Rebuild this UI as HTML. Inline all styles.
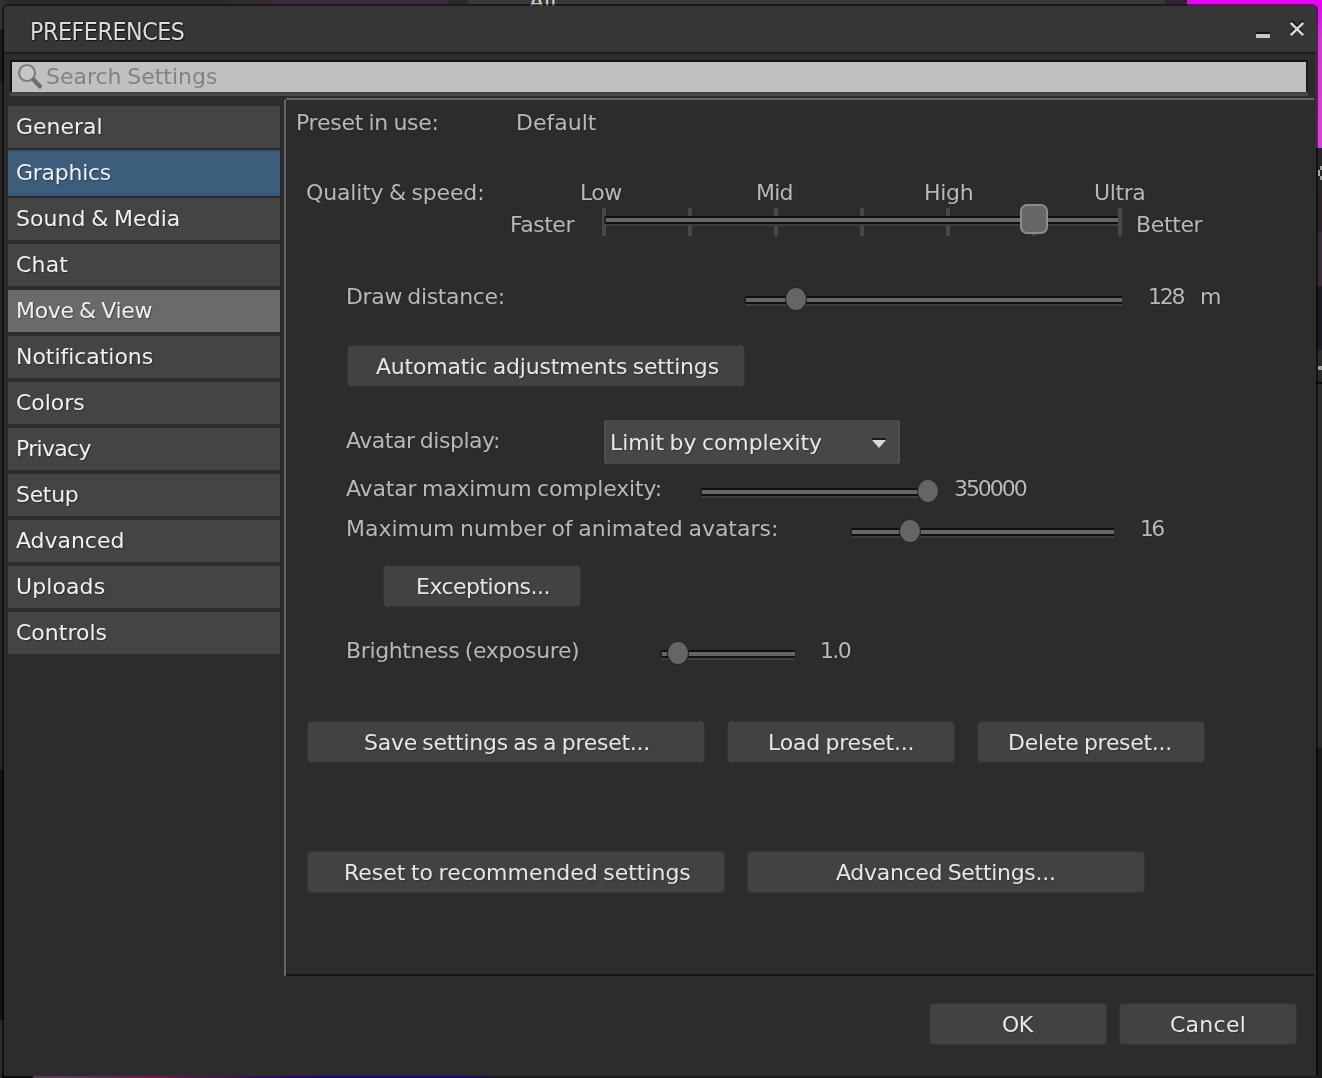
<!DOCTYPE html>
<html lang="en">
<head>
<meta charset="utf-8">
<title>Preferences</title>
<style>
html,body{margin:0;padding:0;}
body{width:1322px;height:1078px;overflow:hidden;background:#2a2a2a;position:relative;
  font-family:"DejaVu Sans","Liberation Sans",sans-serif;font-size:22px;word-spacing:-1.3px;color:#b6b6b6;}
.abs{position:absolute;}
/* backdrop strips */
#bgtop{left:0;top:0;width:1322px;height:6px;background:#393939;}
#bgtopL{left:0;top:0;width:448px;height:4px;background:linear-gradient(90deg,#2c2a2c 0,#2c2a2c 50%,#3a2c3a 65%,#3a2c3a 100%);}
#bgtopD{left:448px;top:0;width:20px;height:4px;background:#282828;}
#bgtopD2{left:1165px;top:0;width:22px;height:4px;background:#30222e;}
#bgtopM{left:1187px;top:0;width:135px;height:8px;background:#e800ff;}
#bgright{left:1310px;top:0;width:12px;height:1078px;background:linear-gradient(180deg,#282428 0,#282428 197px,#2a2228 197px,#2a2228 232px,#382c38 232px,#382c38 286px,#1e1a26 286px,#1e1a26 350px,#2a2a2a 350px,#2a2a2a 748px,#1a1a1a 748px);}
#bgrightM{left:1310px;top:0;width:12px;height:148px;background:linear-gradient(180deg,#e400fa 0,#d23ad0 40px,#d844d2 100%);}
#bgleft{left:0;top:0;width:4px;height:1078px;background:linear-gradient(180deg,#333 0,#333 30px,#1c1c1c 30px,#1c1c1c 82px,#2a242a 82px,#2a242a 770px,#161416 770px,#161416 1020px,#2a2a2a 1020px);}
#bgbot{left:0;top:1074px;width:1322px;height:4px;background:linear-gradient(90deg,#2c282c 0,#2c282c 2px,#0a0a0a 2px,#0a0a0a 32px,#5c3a5c 34px,#6a1a4c 150px,#3a0a5a 260px,#1a0c5c 330px,#1a0c5c 470px,#1c1c1c 500px,#1c1c1c 100%);}
/* window */
#win{left:2px;top:4px;width:1316px;height:1072px;background:#2c2c2c;background-clip:padding-box;border-radius:6px 6px 0 0;box-sizing:border-box;border:2px solid rgba(0,0,0,.55);border-bottom:0;overflow:hidden;}
#titlebar{left:4px;top:6px;width:1312px;height:46px;background:#363636;border-radius:4px 4px 0 0;}
#titleline{left:4px;top:52px;width:1312px;height:2px;background:#1e1e1e;}
/* search */
#search{left:10px;top:60px;width:1298px;height:32px;box-sizing:border-box;border-top:2px solid #141414;border-left:2px solid #141414;border-right:2px solid #1c1c1c;background:#c0c0c0;}
#searchB{left:10px;top:92px;width:1298px;height:4px;background:linear-gradient(180deg,#404040,#4c4c4c);}
/* tabs */
.tab{left:8px;width:272px;height:42px;background:#444444;}
.tab.sel{background:#3c5d7c;height:46px;box-shadow:inset 0 2px 0 #37526c,inset 0 -2px 0 #3a587a;}
.tab.hov{background:#6a6a6a;}
/* panel */
#panelT{left:286px;top:98px;width:1028px;height:2px;background:#646464;}
#panelL{left:284px;top:100px;width:2px;height:876px;background:#646464;}
#panelB{left:286px;top:974px;width:1028px;height:2px;background:#151515;}
#panel{left:286px;top:100px;width:1030px;height:874px;background:#2c2c2c;}
/* text */
.tx{white-space:nowrap;line-height:26px;will-change:transform;}
.title{font-size:24.7px;line-height:30px;font-family:"DejaVu Sans Condensed","DejaVu Sans",sans-serif;font-stretch:condensed;color:#dcdcdc;text-shadow:0 0 2px rgba(0,0,0,.7),1px 1px 1px rgba(0,0,0,.6);}
.srch{color:#828282;}
.tabt{color:#f0f0f0;text-shadow:1px 1px 1px rgba(0,0,0,.35);}
.lbl{color:#b8b8b8;text-shadow:0 0 2px rgba(0,0,0,.3);}
.cmb{color:#e6e6e6;text-shadow:1px 1px 1px rgba(0,0,0,.25);}
.btnt{color:#e6e6e6;text-shadow:1px 1px 1px rgba(0,0,0,.25);}
.btn{height:40px;background:#424242;border-radius:3px;box-shadow:0 0 0 2px #303030;}
.track{height:4px;background:#666666;border-top:2px solid #0e0e0e;border-bottom:2px solid #111;box-shadow:0 2px 0 #3e3e3e,-2px 0 0 #222;}
.thumb{width:20px;height:22px;border-radius:10px/11px;background:#656565;box-shadow:0 0 0 1px #262626;}
.tick{width:4px;height:28px;top:208px;background:#484848;}
</style>
</head>
<body>
<div class="abs" id="bgtop"></div>
<div class="abs" id="bgtopL"></div>
<div class="abs" id="bgtopD"></div>
<div class="abs" id="bgtopD2"></div>
<div class="abs" id="bgtopM"></div>
<div class="abs" id="bgright"></div>
<div class="abs" id="bgrightM"></div>
<div class="abs" style="left:1320px;top:166px;width:2px;height:4px;background:#9a9a9a;"></div>
<div class="abs" style="left:1318px;top:170px;width:2px;height:6px;background:#aaaaaa;"></div>
<div class="abs" style="left:1320px;top:176px;width:2px;height:4px;background:#9a9a9a;"></div>
<div class="abs" style="left:1318px;top:366px;width:4px;height:4px;background:#9c9c9c;"></div>
<div class="abs" style="left:1316px;top:382px;width:6px;height:2px;background:#0c0c0c;"></div>
<div class="abs" id="bgleft"></div>
<div class="abs" id="bgbot"></div>

<div class="abs" id="bgall" style="left:529px;top:-11px;line-height:26px;color:#d4d4d4;white-space:nowrap;">All</div>
<div class="abs" id="win"></div>
<div class="abs" id="titlebar"></div>
<div class="abs" id="titleline"></div>
<!-- minimize / close -->
<div class="abs" style="left:1256px;top:32px;width:14px;height:2px;background:#151515;"></div>
<div class="abs" style="left:1256px;top:34px;width:14px;height:4px;background:#c8c8c8;"></div>
<svg class="abs" style="left:1288px;top:18px;" width="18" height="20" viewBox="0 0 18 20">
  <path d="M3 3 L15 15 M15 3 L3 15" stroke="#151515" stroke-width="2.6" fill="none"/>
  <path d="M2.8 4.8 L15.2 17.2 M15.2 4.8 L2.8 17.2" stroke="#d6d6d6" stroke-width="2.5" fill="none"/>
</svg>

<div class="abs" id="search"></div>
<div class="abs" id="searchB"></div>
<svg class="abs" style="left:16px;top:62px;" width="28" height="28" viewBox="0 0 28 28">
  <circle cx="11" cy="11" r="8" fill="#c6c6c6" stroke="#7e7e7e" stroke-width="2.2"/>
  <path d="M17.5 17.5 L24 24.5" stroke="#6e6e6e" stroke-width="4.2" stroke-linecap="round"/>
</svg>

<div class="abs tab" style="top:106px;"></div>
<div class="abs tab sel" style="top:150px;"></div>
<div class="abs tab" style="top:198px;"></div>
<div class="abs tab" style="top:244px;"></div>
<div class="abs tab hov" style="top:290px;"></div>
<div class="abs tab" style="top:336px;"></div>
<div class="abs tab" style="top:382px;"></div>
<div class="abs tab" style="top:428px;"></div>
<div class="abs tab" style="top:474px;"></div>
<div class="abs tab" style="top:520px;"></div>
<div class="abs tab" style="top:566px;"></div>
<div class="abs tab" style="top:612px;"></div>

<div class="abs" id="panel"></div>
<div class="abs" id="panelT"></div>
<div class="abs" id="panelL"></div>
<div class="abs" id="panelB"></div>

<!-- quality slider -->
<div class="abs tick" style="left:602px;"></div>
<div class="abs tick" style="left:688px;"></div>
<div class="abs tick" style="left:774px;"></div>
<div class="abs tick" style="left:860px;"></div>
<div class="abs tick" style="left:946px;"></div>
<div class="abs tick" style="left:1032px;"></div>
<div class="abs tick" style="left:1118px;"></div>
<div class="abs track" style="left:606px;top:216px;width:512px;"></div>
<div class="abs" style="left:1020px;top:204px;width:28px;height:30px;box-sizing:border-box;border:2px solid #8c8c8c;border-radius:7px;background:#666;"></div>

<div class="abs track" style="left:746px;top:296px;width:376px;"></div>
<div class="abs thumb" style="left:786px;top:288px;"></div>

<div class="abs btn" style="left:348px;top:346px;width:396px;"></div>

<div class="abs" style="left:604px;top:420px;width:296px;height:44px;background:#474747;border-radius:3px;box-shadow:inset -2px 0 0 #4f4f4f,inset 2px 0 0 #4f4f4f;"></div>
<svg class="abs" style="left:870px;top:436px;" width="18" height="14" viewBox="0 0 18 14">
  <rect x="2" y="2" width="14" height="2" fill="#1a1a1a"/>
  <path d="M2 4 H16 L9 12 Z" fill="#d8d8d8"/>
</svg>

<div class="abs track" style="left:702px;top:488px;width:226px;"></div>
<div class="abs thumb" style="left:918px;top:480px;"></div>

<div class="abs track" style="left:852px;top:528px;width:262px;"></div>
<div class="abs thumb" style="left:900px;top:520px;"></div>

<div class="abs btn" style="left:384px;top:566px;width:196px;"></div>

<div class="abs track" style="left:662px;top:650px;width:133px;"></div>
<div class="abs thumb" style="left:668px;top:642px;"></div>

<div class="abs btn" style="left:308px;top:722px;width:396px;"></div>
<div class="abs btn" style="left:728px;top:722px;width:226px;"></div>
<div class="abs btn" style="left:978px;top:722px;width:226px;"></div>

<div class="abs btn" style="left:308px;top:852px;width:416px;"></div>
<div class="abs btn" style="left:748px;top:852px;width:396px;"></div>

<div class="abs btn" style="left:930px;top:1004px;width:176px;"></div>
<div class="abs btn" style="left:1120px;top:1004px;width:176px;"></div>

<div id="t_title" class="abs tx title" style="left:30px;top:17px;letter-spacing:-0.445px;">PREFERENCES</div>
<div id="t_search" class="abs tx srch" style="left:46px;top:64px;letter-spacing:-0.010px;">Search Settings</div>
<div id="t_tab0" class="abs tx tabt" style="left:16px;top:114px;letter-spacing:-0.016px;">General</div>
<div id="t_tab1" class="abs tx tabt" style="left:16px;top:160px;letter-spacing:-0.268px;">Graphics</div>
<div id="t_tab2" class="abs tx tabt" style="left:16px;top:206px;letter-spacing:0.035px;">Sound &amp; Media</div>
<div id="t_tab3" class="abs tx tabt" style="left:16px;top:252px;letter-spacing:0.173px;">Chat</div>
<div id="t_tab4" class="abs tx tabt" style="left:16px;top:298px;letter-spacing:-0.330px;">Move &amp; View</div>
<div id="t_tab5" class="abs tx tabt" style="left:16px;top:344px;letter-spacing:-0.044px;">Notifications</div>
<div id="t_tab6" class="abs tx tabt" style="left:16px;top:390px;letter-spacing:-0.024px;">Colors</div>
<div id="t_tab7" class="abs tx tabt" style="left:16px;top:436px;letter-spacing:-0.687px;">Privacy</div>
<div id="t_tab8" class="abs tx tabt" style="left:16px;top:482px;letter-spacing:-0.330px;">Setup</div>
<div id="t_tab9" class="abs tx tabt" style="left:16px;top:528px;letter-spacing:-0.045px;">Advanced</div>
<div id="t_tab10" class="abs tx tabt" style="left:16px;top:574px;letter-spacing:0.093px;">Uploads</div>
<div id="t_tab11" class="abs tx tabt" style="left:16px;top:620px;letter-spacing:-0.003px;">Controls</div>
<div id="l_preset" class="abs tx lbl" style="left:296px;top:110px;letter-spacing:-0.261px;">Preset in use:</div>
<div id="l_default" class="abs tx lbl" style="left:516px;top:110px;letter-spacing:0.013px;">Default</div>
<div id="l_quality" class="abs tx lbl" style="left:306px;top:180px;letter-spacing:-0.164px;">Quality &amp; speed:</div>
<div id="l_low" class="abs tx lbl" style="left:580px;top:180px;letter-spacing:-0.500px;">Low</div>
<div id="l_mid" class="abs tx lbl" style="left:756px;top:180px;letter-spacing:-0.765px;">Mid</div>
<div id="l_high" class="abs tx lbl" style="left:924px;top:180px;letter-spacing:-0.304px;">High</div>
<div id="l_ultra" class="abs tx lbl" style="left:1094px;top:180px;letter-spacing:-0.402px;">Ultra</div>
<div id="l_faster" class="abs tx lbl" style="left:510px;top:212px;letter-spacing:-0.458px;">Faster</div>
<div id="l_better" class="abs tx lbl" style="left:1136px;top:212px;letter-spacing:-0.370px;">Better</div>
<div id="l_draw" class="abs tx lbl" style="left:346px;top:284px;letter-spacing:-0.360px;">Draw distance:</div>
<div id="l_128" class="abs tx lbl" style="left:1148px;top:284px;letter-spacing:-2.220px;">128</div>
<div id="l_m" class="abs tx lbl" style="left:1200px;top:284px;">m</div>
<div id="l_avdisp" class="abs tx lbl" style="left:346px;top:428px;letter-spacing:-0.474px;">Avatar display:</div>
<div id="l_combo" class="abs tx cmb" style="left:610px;top:430px;letter-spacing:-0.105px;">Limit by complexity</div>
<div id="l_avmax" class="abs tx lbl" style="left:346px;top:476px;letter-spacing:-0.171px;">Avatar maximum complexity:</div>
<div id="l_350" class="abs tx lbl" style="left:954px;top:476px;letter-spacing:-2.060px;">350000</div>
<div id="l_maxanim" class="abs tx lbl" style="left:346px;top:516px;letter-spacing:-0.015px;">Maximum number of animated avatars:</div>
<div id="l_16" class="abs tx lbl" style="left:1140px;top:516px;letter-spacing:-2.770px;">16</div>
<div id="l_bright" class="abs tx lbl" style="left:346px;top:638px;letter-spacing:-0.375px;">Brightness (exposure)</div>
<div id="l_10" class="abs tx lbl" style="left:820px;top:638px;letter-spacing:-1.650px;">1.0</div>
<div id="b_auto" class="abs tx btnt" style="left:376px;top:354px;letter-spacing:-0.187px;">Automatic adjustments settings</div>
<div id="b_exc" class="abs tx btnt" style="left:416px;top:574px;letter-spacing:-0.523px;">Exceptions...</div>
<div id="b_save" class="abs tx btnt" style="left:364px;top:730px;letter-spacing:-0.275px;">Save settings as a preset...</div>
<div id="b_load" class="abs tx btnt" style="left:768px;top:730px;letter-spacing:-0.206px;">Load preset...</div>
<div id="b_del" class="abs tx btnt" style="left:1008px;top:730px;letter-spacing:-0.292px;">Delete preset...</div>
<div id="b_reset" class="abs tx btnt" style="left:344px;top:860px;letter-spacing:-0.036px;">Reset to recommended settings</div>
<div id="b_adv" class="abs tx btnt" style="left:836px;top:860px;letter-spacing:-0.300px;">Advanced Settings...</div>
<div id="b_ok" class="abs tx btnt" style="left:1002px;top:1012px;letter-spacing:-0.600px;">OK</div>
<div id="b_cancel" class="abs tx btnt" style="left:1170px;top:1012px;letter-spacing:0.252px;">Cancel</div>
</body>
</html>
